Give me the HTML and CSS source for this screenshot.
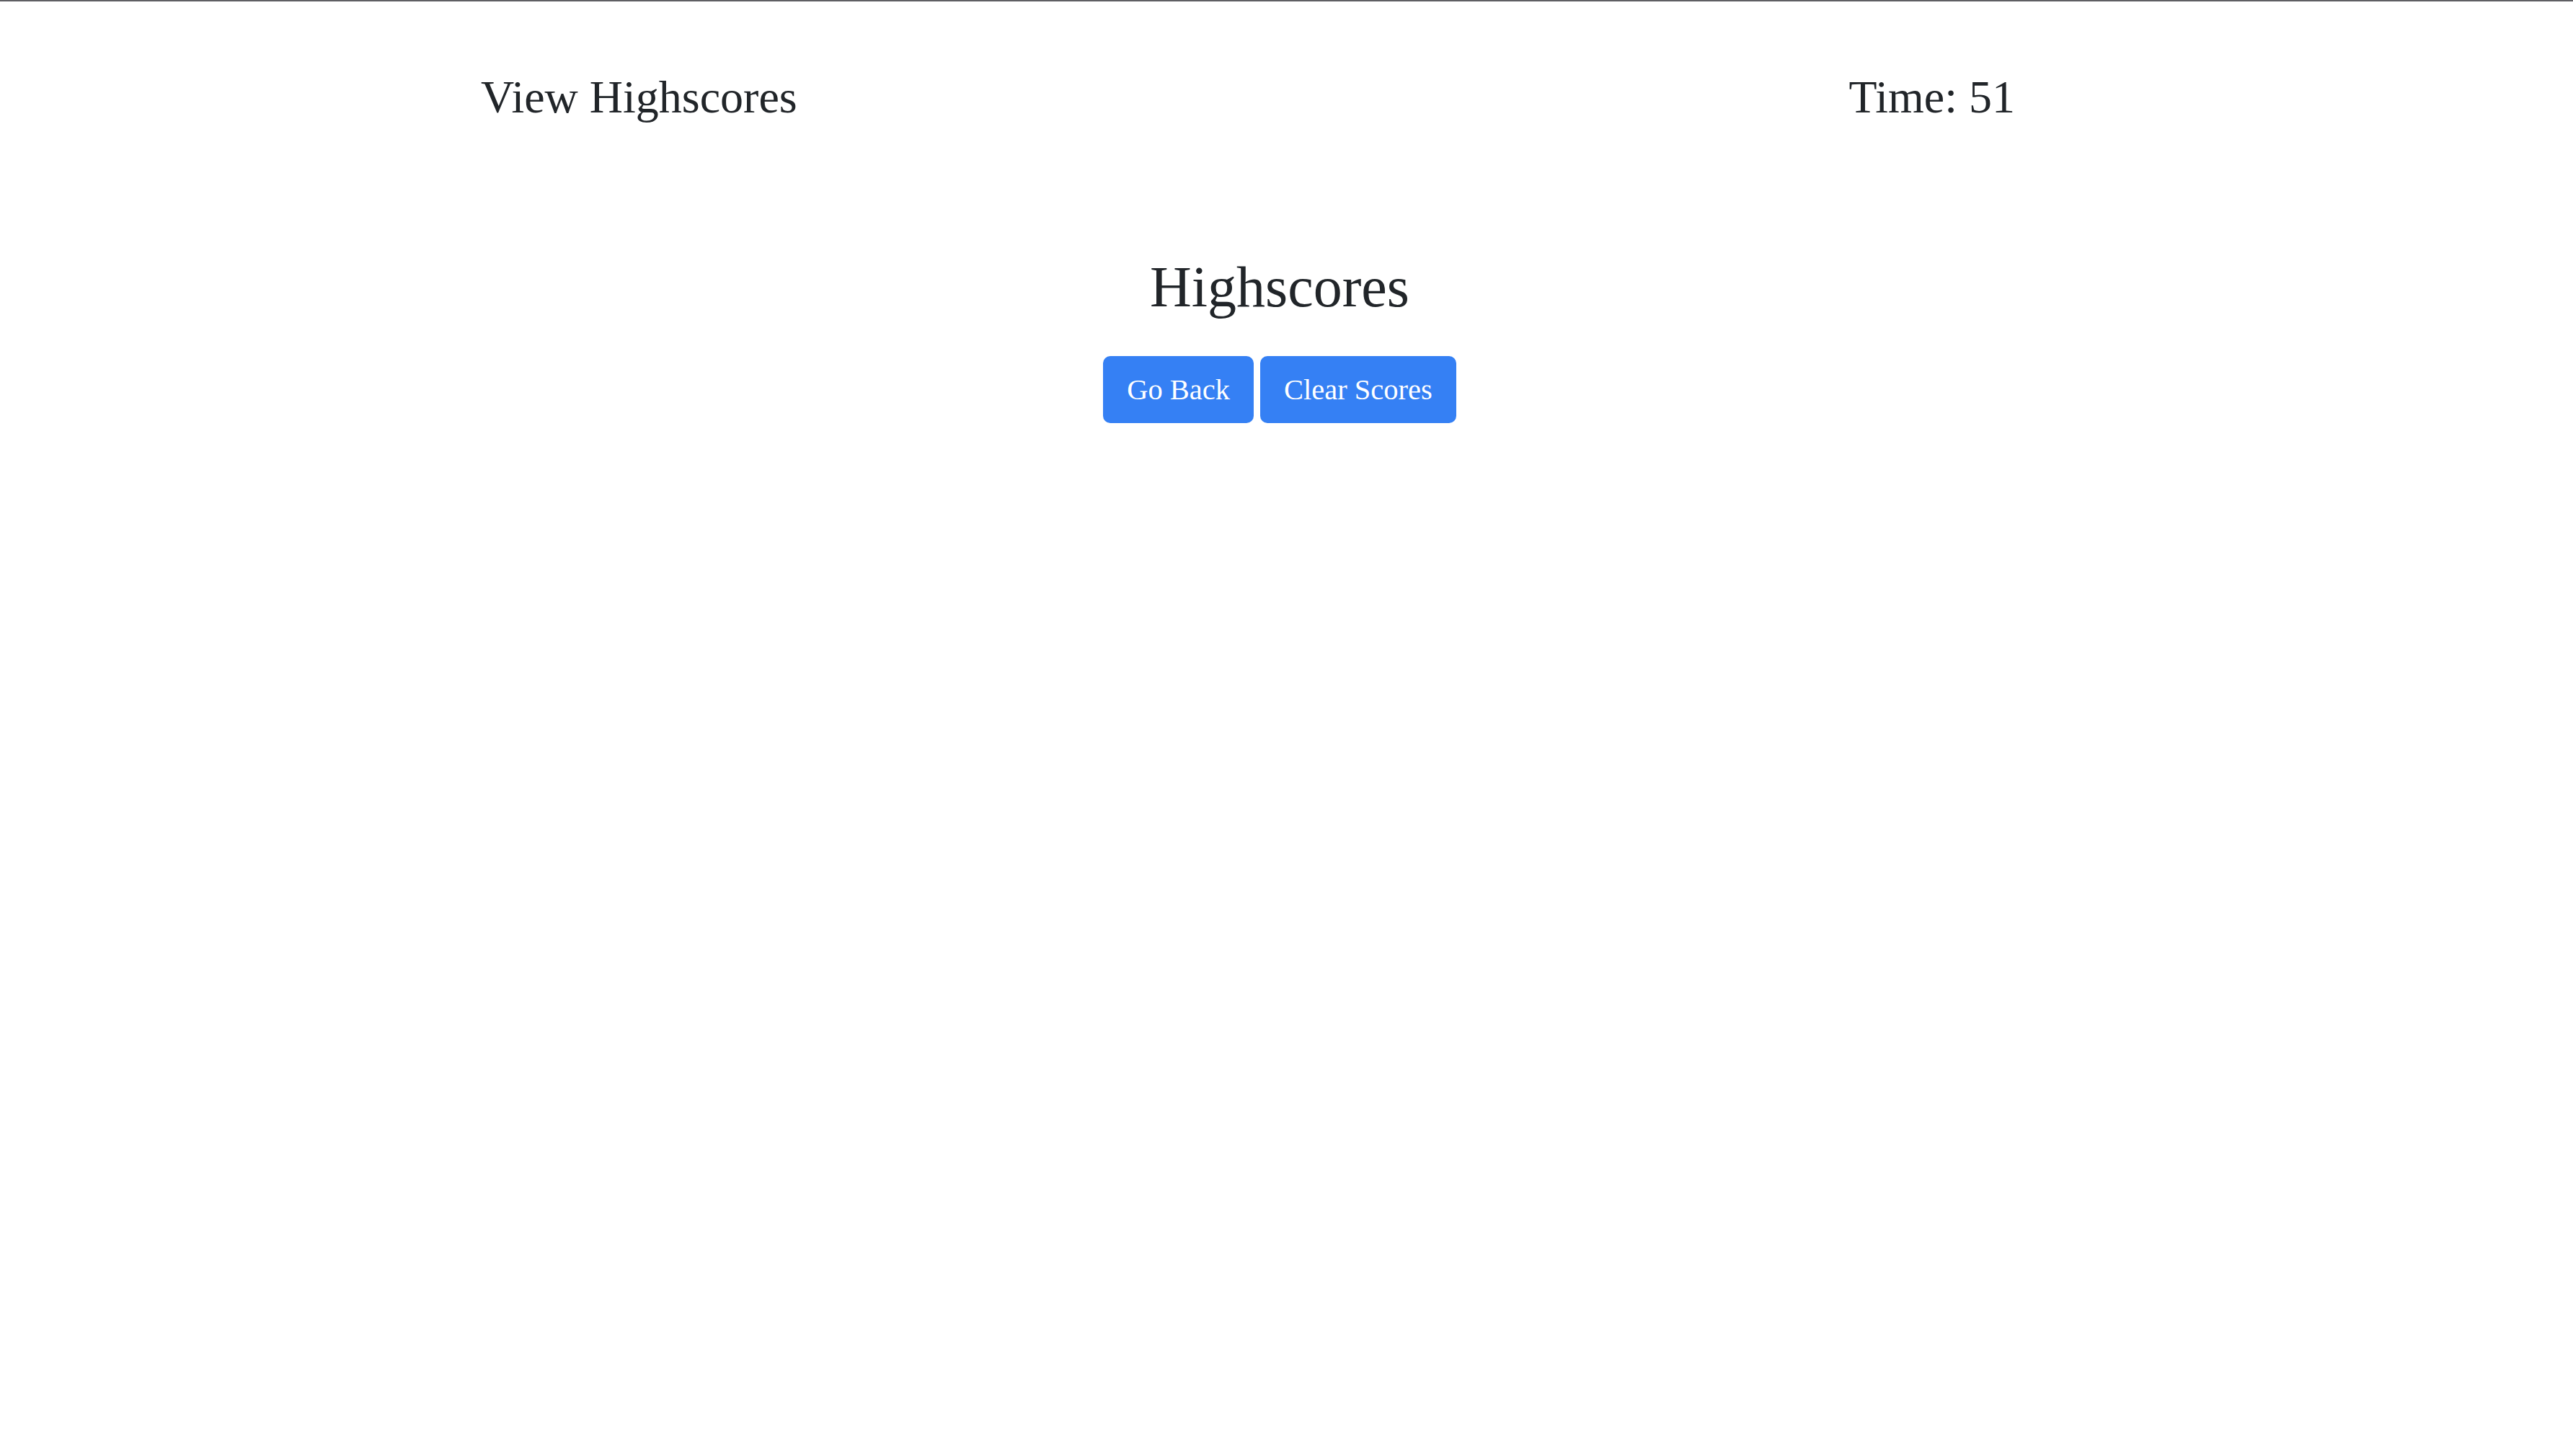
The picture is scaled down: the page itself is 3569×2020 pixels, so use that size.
FILE: index.html
```html
<!DOCTYPE html>
<html lang="en">
<head>
<meta charset="utf-8">
<title>Highscores</title>
<link rel="stylesheet" href="styles.css">
</head>
<body>
<div class="topline"></div>
<header class="header">
  <a class="view-link">View Highscores</a>
  <div class="timer">Time: 51</div>
</header>
<main class="main">
  <h1 class="title">Highscores</h1>
  <ol class="scores"></ol>
  <div class="actions">
    <button class="btn">Go Back</button>
    <button class="btn">Clear Scores</button>
  </div>
</main>
</body>
</html>
```
FILE: styles.css
```css
html, body {
  margin: 0;
  padding: 0;
  background: #ffffff;
}
body {
  font-family: "Liberation Serif", "Times New Roman", serif;
  color: #212529;
  width: 3569px;
  height: 2020px;
  overflow: hidden;
}
.topline {
  height: 2px;
  background: #5f5f63;
}
.header {
  display: flex;
  justify-content: space-between;
  align-items: flex-start;
  padding: 94px 774px 0 667px;
  font-size: 64px;
  line-height: 78px;
}
.view-link {
  color: #212529;
  text-decoration: none;
}
.main {
  display: flex;
  flex-direction: column;
  align-items: center;
  padding: 176px 19px 0 0;
}
.title {
  margin: 0;
  font-size: 80px;
  line-height: 96px;
  font-weight: 400;
}
.scores {
  margin: 0;
  padding: 0;
  list-style: none;
}
.actions {
  display: flex;
  gap: 9px;
  margin-top: 48px;
}
.btn {
  font-family: "Liberation Serif", "Times New Roman", serif;
  font-size: 40.5px;
  line-height: 60px;
  color: #ffffff;
  background: #3580f4;
  border: 2px solid #3580f4;
  border-radius: 10px;
  padding: 14.5px 31px;
  margin: 0;
  cursor: pointer;
}
```
